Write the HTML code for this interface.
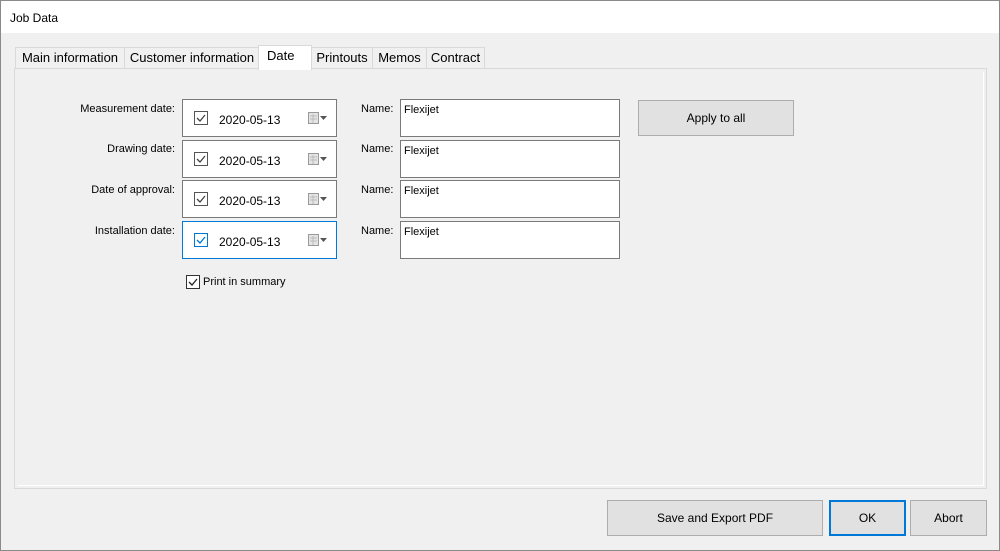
<!DOCTYPE html>
<html><head><style>
body{margin:0;width:1000px;height:551px;background:#f0f0f0;font-family:"Liberation Sans",sans-serif;font-size:11px;color:#000;position:relative;overflow:hidden}
.a{position:absolute}
.win{left:0;top:0;width:998px;height:549px;border:1px solid #8a8a8a}
.title{left:1px;top:1px;width:998px;height:32px;background:#fff}
.tab{top:47px;height:20px;border:1px solid #d9d9d9;border-bottom:none;background:#f0f0f0;font-size:13px;line-height:20px;text-align:center}
.panel{left:14px;top:68px;width:971px;height:419px;border:1px solid #d9d9d9;background:#f0f0f0}
.inner{left:18px;top:72px;width:965px;height:413px;border-right:1px solid #fff;border-bottom:1px solid #fff}
.lbl{text-align:right;width:160px;left:15px;top:0}
.dt{left:182px;width:153px;height:36px;background:#fff;border:1px solid #7a7a7a}
.dt .cb{left:11px;top:11px;width:12px;height:12px;border:1px solid #555}
.dt .v{left:36px;top:13px;font-size:12px}
.nm{left:400px;width:218px;height:36px;background:#fff;border:1px solid #7a7a7a}
.nm span{position:absolute;left:3px;top:4px}
.nl{left:361px}
.btn{background:#e1e1e1;border:1px solid #adadad;text-align:center;line-height:34px;font-size:12px}
</style></head><body>
<div class="a win"></div>
<div class="a title"></div>
<div class="a" style="left:10px;top:11px;font-size:12px">Job Data</div>
<div class="a panel"></div>
<div class="a inner"></div>
<div class="a tab" style="left:15px;width:108px">Main information</div>
<div class="a tab" style="left:124px;width:134px">Customer information</div>
<div class="a tab" style="left:311px;width:60px">Printouts</div>
<div class="a tab" style="left:372px;width:53px">Memos</div>
<div class="a tab" style="left:426px;width:57px">Contract</div>
<div class="a tab" style="left:258px;top:45px;width:52px;height:24px;background:#fff;line-height:20px;text-align:left"><span style="margin-left:8px">Date</span></div>

<div class="a lbl" style="top:103px">Measurement date:</div>
<div class="a lbl" style="top:143px">Drawing date:</div>
<div class="a lbl" style="top:184px">Date of approval:</div>
<div class="a lbl" style="top:225px">Installation date:</div>

<div class="a dt" style="top:99px"><div class="a cb"></div><svg class="a" style="left:12px;top:12px" width="12" height="12"><path d="M2 6l3 3 5-6" stroke="#444" fill="none" stroke-width="1.3"/></svg><div class="a v">2020-05-13</div><svg class="a" style="left:124px;top:11px" width="24" height="14"><rect x="1.5" y="1.5" width="10" height="11" fill="#e4e4e4" stroke="#999"/><path d="M3 5h7M3 8h7M6 3v9" stroke="#bbb"/><path d="M13 5h7l-3.5 4z" fill="#555"/></svg></div>
<div class="a dt" style="top:140px"><div class="a cb"></div><svg class="a" style="left:12px;top:12px" width="12" height="12"><path d="M2 6l3 3 5-6" stroke="#444" fill="none" stroke-width="1.3"/></svg><div class="a v">2020-05-13</div><svg class="a" style="left:124px;top:11px" width="24" height="14"><rect x="1.5" y="1.5" width="10" height="11" fill="#e4e4e4" stroke="#999"/><path d="M3 5h7M3 8h7M6 3v9" stroke="#bbb"/><path d="M13 5h7l-3.5 4z" fill="#555"/></svg></div>
<div class="a dt" style="top:180px"><div class="a cb"></div><svg class="a" style="left:12px;top:12px" width="12" height="12"><path d="M2 6l3 3 5-6" stroke="#444" fill="none" stroke-width="1.3"/></svg><div class="a v">2020-05-13</div><svg class="a" style="left:124px;top:11px" width="24" height="14"><rect x="1.5" y="1.5" width="10" height="11" fill="#e4e4e4" stroke="#999"/><path d="M3 5h7M3 8h7M6 3v9" stroke="#bbb"/><path d="M13 5h7l-3.5 4z" fill="#555"/></svg></div>
<div class="a dt" style="top:221px;border-color:#0078d7"><div class="a cb" style="border-color:#0078d7"></div><svg class="a" style="left:12px;top:12px" width="12" height="12"><path d="M2 6l3 3 5-6" stroke="#0078d7" fill="none" stroke-width="1.3"/></svg><div class="a v">2020-05-13</div><svg class="a" style="left:124px;top:11px" width="24" height="14"><rect x="1.5" y="1.5" width="10" height="11" fill="#e4e4e4" stroke="#999"/><path d="M3 5h7M3 8h7M6 3v9" stroke="#bbb"/><path d="M13 5h7l-3.5 4z" fill="#555"/></svg></div>

<div class="a" style="left:186px;top:275px;width:12px;height:12px;border:1px solid #333;background:#fff"></div>
<svg class="a" style="left:187px;top:276px" width="12" height="12"><path d="M2 6l3 3 5-6" stroke="#222" fill="none" stroke-width="1.3"/></svg>
<div class="a" style="left:203px;top:276px">Print in summary</div>

<div class="a nl" style="top:103px">Name:</div>
<div class="a nl" style="top:143px">Name:</div>
<div class="a nl" style="top:184px">Name:</div>
<div class="a nl" style="top:225px">Name:</div>
<div class="a nm" style="top:99px"><span>Flexijet</span></div>
<div class="a nm" style="top:140px"><span>Flexijet</span></div>
<div class="a nm" style="top:180px"><span>Flexijet</span></div>
<div class="a nm" style="top:221px"><span>Flexijet</span></div>

<div class="a btn" style="left:638px;top:100px;width:154px;height:34px">Apply to all</div>
<div class="a btn" style="left:607px;top:500px;width:214px;height:34px">Save and Export PDF</div>
<div class="a btn" style="left:829px;top:500px;width:73px;height:32px;border:2px solid #0078d7;line-height:32px">OK</div>
<div class="a btn" style="left:910px;top:500px;width:75px;height:34px">Abort</div>
</body></html>
